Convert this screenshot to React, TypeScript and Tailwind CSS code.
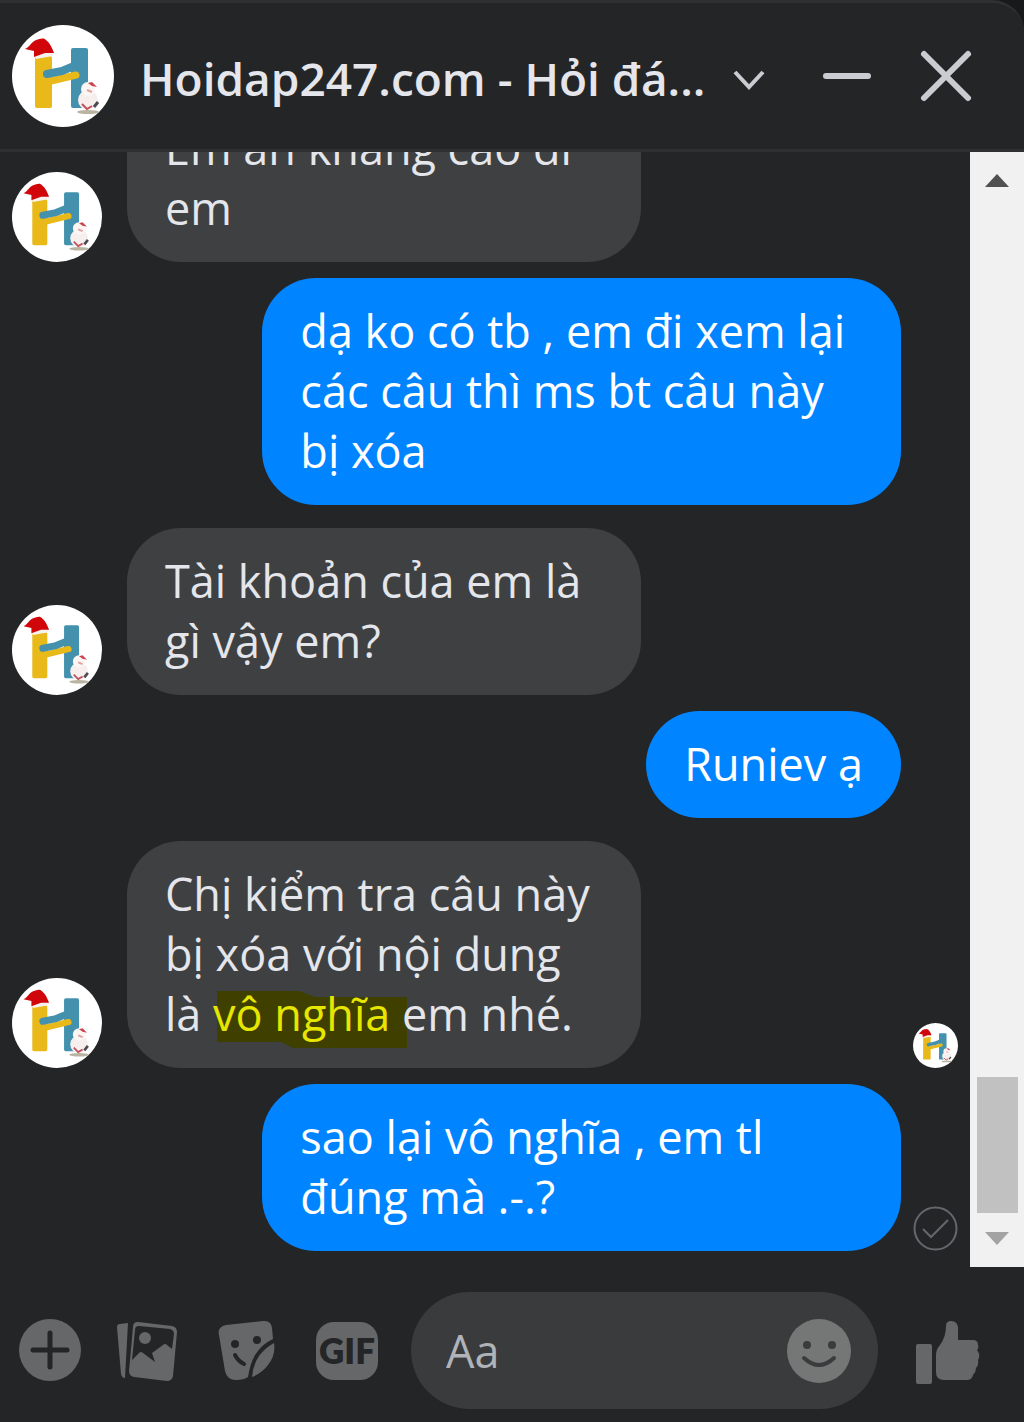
import type { ReactNode } from "react";
import { clsx } from "clsx";

interface Message {
  id: number;
  from: "page" | "me";
  lines: ReactNode[];
  fit?: boolean;
  status?: "seen" | "sent";
}

const messages: Message[] = [
  { id: 1, from: "page", lines: ["Em ấn kháng cáo đi", "em"] },
  {
    id: 2,
    from: "me",
    lines: ["dạ ko có tb , em đi xem lại", "các câu thì ms bt câu này", "bị xóa"],
  },
  { id: 3, from: "page", lines: ["Tài khoản của em là", "gì vậy em?"] },
  { id: 4, from: "me", lines: ["Runiev ạ"], fit: true },
  {
    id: 5,
    from: "page",
    lines: [
      "Chị kiểm tra câu này",
      "bị xóa với nội dung",
      <>
        là <Highlight>vô nghĩa</Highlight> em nhé.
      </>,
    ],
    status: "seen",
  },
  {
    id: 6,
    from: "me",
    lines: ["sao lại vô nghĩa , em tl", "đúng mà .-.?"],
    status: "sent",
  },
];

function Highlight({ children }: { children: ReactNode }) {
  return (
    <mark className="relative bg-transparent text-[#e6e600]">
      {/* Uneven marker stroke behind the words */}
      <svg
        className="absolute top-2 left-1 -z-10 h-[57px] w-[190px]"
        viewBox="0 0 190 57"
        preserveAspectRatio="none"
        aria-hidden="true"
      >
        <path d="M0 0H82L98 6H190V57H76L64 51H0Z" fill="#3f3f00" />
      </svg>
      {children}
    </mark>
  );
}

function Avatar({ className }: { className: string }) {
  return (
    <svg className={clsx("shrink-0", className)} viewBox="0 0 102 102" role="img" aria-label="Hoidap247.com">
      <circle cx="51" cy="51" r="51" fill="#fff" />
      <rect x="59" y="23" width="17" height="60" rx="2" fill="#4391ad" />
      <rect x="23" y="31" width="17" height="52" rx="2" fill="#e8b918" />
      <path d="M35 57L64 50" stroke="#e8b918" strokeWidth="7" strokeLinecap="round" />
      <path d="M35 49L50 46L62 41" stroke="#4391ad" strokeWidth="8" strokeLinecap="round" strokeLinejoin="round" fill="none" />
      <path d="M21 29L42 26L41 31L24 34Z" fill="#f6f1ee" />
      <path d="M13 24C18 22 19 17 24 15C28 14 31 12 34 15C38 18 40 23 42 28L33 28L22 32V26Z" fill="#d0060b" />
      {/* Snowman */}
      <ellipse cx="76" cy="87" rx="11" ry="2" fill="#b9b3a2" />
      <circle cx="76" cy="75" r="10" fill="#f7efee" />
      <circle cx="76" cy="64" r="7" fill="#fbf5f4" />
      <path d="M76 58L80 57L85 62L80 61Z" fill="#c9444c" />
      <path d="M75 65L80 67" stroke="#e2a0a0" strokeWidth="2" />
      <path d="M70 79L75 84L80 81" stroke="#c2505a" strokeWidth="2" fill="none" />
      <path d="M82 82L86 77" stroke="#4b4b52" strokeWidth="3" />
    </svg>
  );
}

function MessageRow({ message }: { message: Message }) {
  const mine = message.from === "me";
  return (
    <li
      className={clsx(
        "flex shrink-0 items-end pr-3",
        mine ? "mt-4 justify-end" : "mt-[23px] justify-between pl-3"
      )}
    >
      {!mine && <Avatar className="mr-[25px] h-[90px] w-[90px]" />}
      <div
        className={clsx(
          "rounded-[54px] px-[38px] pt-[23px] pb-6 text-[45px] leading-[60px] whitespace-nowrap",
          mine ? "bg-[#0084ff] text-white" : "mr-auto bg-[#3e4042] text-[#e4e6eb]",
          !message.fit && (mine ? "w-2/3" : "w-[514px]")
        )}
      >
        {message.lines.map((line, i) => (
          <p key={i} className="isolate">
            {line}
          </p>
        ))}
      </div>
      <div className="ml-3 w-[45px] shrink-0">
        {message.status === "seen" && <Avatar className="h-[45px] w-[45px]" />}
        {message.status === "sent" && (
          <svg className="h-[45px] w-[45px]" viewBox="0 0 45 45" fill="none" stroke="#65676b" aria-label="Đã gửi">
            <circle cx="22.5" cy="22.5" r="21" strokeWidth="2" />
            <path d="M10 23L18 31L35 14" strokeWidth="2" />
          </svg>
        )}
      </div>
    </li>
  );
}

function Header() {
  return (
    <header className="flex h-[152px] shrink-0 items-center rounded-tr-[32px] border-t-3 border-b-3 border-[#2f3032] bg-[#242526] pr-[51px] pl-3 text-[#c9ccd1]">
      <Avatar className="h-[102px] w-[102px]" />
      <h1 className="ml-[26px] pt-1 text-[46px] leading-[60px] font-semibold whitespace-nowrap text-[#e4e6eb]">
        Hoidap247.com - Hỏi đá...
      </h1>
      <button type="button" aria-label="Tùy chọn" className="ml-auto">
        <svg className="h-8 w-9" viewBox="0 0 36 32" fill="none" stroke="currentColor" strokeWidth="4">
          <path d="M4 12L18 27L32 12" />
        </svg>
      </button>
      <button type="button" aria-label="Thu nhỏ" className="ml-[54px]">
        <svg className="h-[52px] w-[52px]" viewBox="0 0 52 52" stroke="currentColor" strokeWidth="6" strokeLinecap="round">
          <path d="M5 26H47" />
        </svg>
      </button>
      <button type="button" aria-label="Đóng" className="ml-[46px]">
        <svg className="h-[54px] w-[54px]" viewBox="0 0 54 54" stroke="currentColor" strokeWidth="6" strokeLinecap="round">
          <path d="M5 5L49 49M49 5L5 49" />
        </svg>
      </button>
    </header>
  );
}

function Scrollbar() {
  return (
    <div className="flex w-[54px] shrink-0 flex-col items-center bg-[#f1f1f1] pt-[22px] pb-[22px]">
      <button type="button" aria-label="Cuộn lên">
        <svg className="h-[13px] w-6" viewBox="0 0 24 13">
          <path d="M12 0L24 13H0Z" fill="#505050" />
        </svg>
      </button>
      <div className="mt-auto h-[136px] w-[41px] bg-[#c1c1c1]" />
      <button type="button" aria-label="Cuộn xuống" className="mt-[19px]">
        <svg className="h-[13px] w-6" viewBox="0 0 24 13">
          <path d="M0 0H24L12 13Z" fill="#a3a3a3" />
        </svg>
      </button>
    </div>
  );
}

function Composer() {
  return (
    <form className="flex shrink-0 items-center pt-[25px] pr-11 pb-[13px] pl-[18px] text-[#666768]">
      <button type="button" aria-label="Thêm">
        <svg className="h-16 w-16" viewBox="0 0 64 64">
          <circle cx="32" cy="31" r="31" fill="currentColor" />
          <path d="M32 14V48M15 31H49" stroke="#242526" strokeWidth="5" strokeLinecap="round" />
        </svg>
      </button>
      <button type="button" aria-label="Ảnh" className="ml-[33px]">
        <svg className="h-16 w-16" viewBox="0 0 64 64">
          <path d="M2 8Q2 5 5 5L13 4L10 59Q7 59 6 55Z" fill="currentColor" />
          <path
            d="M23 3L57 7Q62 8 62 13L58 57Q57 62 52 62L19 58Q14 57 14 52L18 8Q18 3 23 3Z"
            fill="currentColor"
          />
          <path
            d="M24 7L55 10Q59 11 59 15L57 30L52 26Q50 24 48 26L37 34L40 43L28 34Q26 32 24 34L17 41L20 11Q20 7 24 7Z"
            fill="#242526"
          />
          <circle cx="30" cy="19" r="6" fill="currentColor" />
        </svg>
      </button>
      <button type="button" aria-label="Nhãn dán" className="ml-[38px]">
        <svg className="h-16 w-[58px]" viewBox="0 0 58 64">
          <path
            d="M9 6L46 2Q54 1 55 9L56 20Q45 25 38 36Q33 45 31 58Q27 61 19 61Q10 61 8 52L2 16Q0 8 9 6Z"
            fill="currentColor"
          />
          <path d="M57 24Q59 36 51 46Q45 54 35 58Q36 46 42 37Q48 29 57 24Z" fill="currentColor" />
          <circle cx="18" cy="25" r="4" fill="#242526" />
          <circle cx="40" cy="21" r="4" fill="#242526" />
          <path d="M18 36Q21 42 27 45" stroke="#242526" strokeWidth="4" strokeLinecap="round" fill="none" />
        </svg>
      </button>
      <button
        type="button"
        className="ml-[41px] flex h-[58px] w-[62px] items-center justify-center rounded-[18px] bg-[#666768] font-['Lato','Open_Sans',sans-serif] text-[35px] leading-none font-extrabold text-[#242526]"
      >
        GIF
      </button>
      <div className="ml-[33px] flex h-[117px] min-w-0 flex-1 items-center rounded-full bg-[#3a3b3c] pr-[27px] pl-[35px]">
        <input
          type="text"
          aria-label="Tin nhắn"
          placeholder="Aa"
          className="min-w-0 flex-1 bg-transparent text-[45px] leading-[60px] text-[#e4e6eb] outline-none placeholder:text-[#b0b3b8]"
        />
        <button type="button" aria-label="Biểu tượng cảm xúc" className="text-[#757777]">
          <svg className="h-16 w-16" viewBox="0 0 64 64">
            <circle cx="32" cy="32" r="32" fill="currentColor" />
            <circle cx="20" cy="26" r="4" fill="#3a3b3c" />
            <circle cx="45" cy="26" r="4" fill="#3a3b3c" />
            <path d="M17 39Q32 53 47 39" stroke="#3a3b3c" strokeWidth="4" strokeLinecap="round" fill="none" />
          </svg>
        </button>
      </div>
      <button type="button" aria-label="Thích" className="ml-[38px]">
        <svg className="h-[66px] w-16" viewBox="0 0 64 66" fill="currentColor">
          <rect y="26" width="16" height="40" rx="2" />
          <path d="M20 38Q20 31 24 27Q30 19 30 8Q30 3 35 3Q42 3 42 11V22H57Q62 22 62 27Q63 30 61 32Q65 37 62 42Q63 47 60 50Q60 54 57 57Q56 62 51 62H28Q20 62 20 54Z" />
        </svg>
      </button>
    </form>
  );
}

export default function App() {
  return (
    <div className="flex h-screen flex-col overflow-hidden bg-[#18191b] font-['Open_Sans','Noto_Sans',sans-serif]">
      <Header />
      <main className="flex min-h-0 flex-1 bg-[#242526]">
        <ul className="flex min-w-0 flex-1 flex-col justify-end overflow-hidden pb-4">
          {messages.map((message) => (
            <MessageRow key={message.id} message={message} />
          ))}
        </ul>
        <Scrollbar />
      </main>
      <footer className="bg-[#242526]">
        <Composer />
      </footer>
    </div>
  );
}
